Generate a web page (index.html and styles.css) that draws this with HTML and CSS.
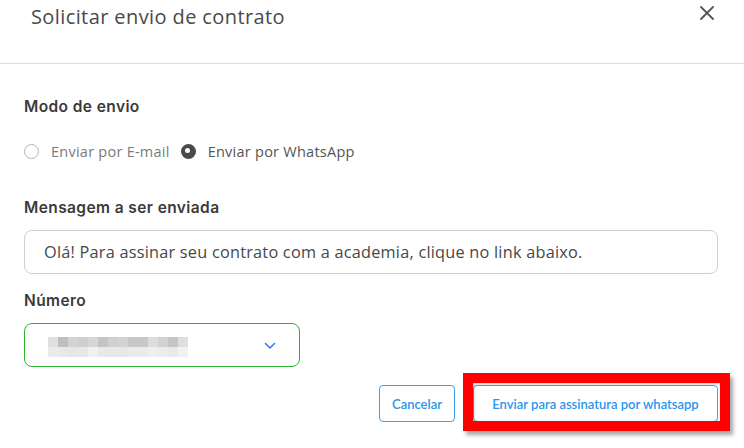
FILE: index.html
```html
<!DOCTYPE html>
<html lang="pt">
<head>
<meta charset="utf-8">
<link rel="stylesheet" href="styles.css">
</head>
<body>
<div class="modal">
  <header class="modal-header">
    <h1 class="title">Solicitar envio de contrato</h1>
    <button class="close" aria-label="Fechar">
      <svg width="14" height="14" viewBox="0 0 14 14"><path d="M1 1L13 13M13 1L1 13" stroke="#555" stroke-width="1.8" stroke-linecap="round"/></svg>
    </button>
  </header>
  <div class="modal-body">
    <div class="label">Modo de envio</div>
    <div class="radios">
      <label class="radio"><span class="dot"></span><span class="rtext">Enviar por E-mail</span></label>
      <label class="radio checked"><span class="dot"></span><span class="rtext">Enviar por WhatsApp</span></label>
    </div>
    <div class="label label-msg">Mensagem a ser enviada</div>
    <div class="input">Olá! Para assinar seu contrato com a academia, clique no link abaixo.</div>
    <div class="label label-num">Número</div>
    <div class="select">
      <div class="blur">
        <span style="background:#e0e0e0"></span><span style="background:#bdbec0"></span><span style="background:#d2d3d5"></span><span style="background:#cdced0"></span><span style="background:#d6d6d6"></span><span style="background:#c3c4c6"></span><span style="background:#d0d0d2"></span><span style="background:#d3d3d5"></span><span style="background:#c6c7c9"></span><span style="background:#c6c7c9"></span><span style="background:#dcdcdc"></span><span style="background:#d2d2d4"></span><span style="background:#c4c5c7"></span><span style="background:#dfdfdf"></span>
        <span style="background:#ebebeb"></span><span style="background:#e8e8e8"></span><span style="background:#e5e6e6"></span><span style="background:#e6e7e7"></span><span style="background:#f1f1f1"></span><span style="background:#e9e9e9"></span><span style="background:#e8e8e8"></span><span style="background:#e8e8e8"></span><span style="background:#ebebeb"></span><span style="background:#ebebeb"></span><span style="background:#efefef"></span><span style="background:#ececec"></span><span style="background:#e9e9e9"></span><span style="background:#f1f1f1"></span>
      </div>
      <svg class="chev" width="12" height="8" viewBox="0 0 12 8"><path d="M1.5 1.5L6 6L10.5 1.5" fill="none" stroke="#2f7cf6" stroke-width="1.6" stroke-linecap="round" stroke-linejoin="round"/></svg>
    </div>
    <div class="actions">
      <button class="btn">Cancelar</button>
      <button class="btn btn-send">Enviar para assinatura por whatsapp<span class="highlight"></span></button>
    </div>
  </div>
</div>
</body>
</html>
```
FILE: styles.css
```css
* { box-sizing: border-box; }
html, body { margin: 0; padding: 0; background: #fff; }
body { width: 744px; height: 448px; overflow: hidden; font-family: "Open Sans", "Lato", sans-serif; }
.modal { width: 744px; }
.modal-header {
  height: 64px;
  border-bottom: 1px solid #dedede;
  display: flex;
  align-items: flex-start;
  justify-content: space-between;
  padding: 3px 30px 0 31px;
}
.title { margin: 0; font-weight: 400; font-size: 20px; line-height: 28px; color: #4a4a4a; letter-spacing: 0.4px; }
.close { border: 0; background: none; padding: 0; margin-top: 3px; width: 14px; height: 14px; display: flex; }
.modal-body { padding: 33px 26px 0 24px; }
.label { font-family: "Inter", sans-serif; font-weight: 600; font-size: 15.5px; line-height: 20px; color: #3a3a3a; letter-spacing: 0.4px; }
.radios { display: flex; gap: 11px; margin-top: 24px; height: 20px; align-items: center; }
.radio { display: flex; align-items: center; gap: 12px; font-size: 14.5px; color: #7a7a7a; letter-spacing: 0.25px; }
.radio.checked { color: #555; }
.dot { width: 15px; height: 15px; border-radius: 50%; border: 1px solid #b5b5b5; display: block; }
.checked .dot { background: #4a4a4a; border: 5px solid #4a4a4a; position: relative; }
.checked .dot::after { content: ""; position: absolute; left: 0; top: 0; width: 5px; height: 5px; margin: -1px 0 0 -1px; border-radius: 50%; background: #fff; }
.label-msg { margin-top: 37px; }
.input {
  margin-top: 12px;
  height: 44px;
  border: 1px solid #cfcfcf;
  border-radius: 8px;
  padding: 0 19px;
  display: flex; align-items: center;
  font-size: 16.3px; color: #474747; letter-spacing: 0.23px;
}
.label-num { margin-top: 17px; }
.select {
  margin-top: 12px;
  width: 276px; height: 44px;
  border: 1px solid #2db52a;
  border-radius: 8px;
  display: flex; align-items: center; justify-content: space-between;
  padding: 0 23px 0 23px;
}
.blur { display: grid; grid-template-columns: repeat(14, 10px); grid-template-rows: 10px 10px; margin-top: 4px; }
.blur span { display: block; }
.chev { margin-top: 2px; }
.actions { display: flex; justify-content: flex-end; gap: 18px; margin-top: 18px; }
.btn {
  height: 37px; padding: 0 12px;
  border: 1px solid #3fa2f0; border-radius: 4px; background: #fff;
  font-family: "Lato", sans-serif; font-weight: 600; font-size: 13px; color: #2b96ea;
}
.btn-send { width: 245px; padding: 0; position: relative; }
.highlight {
  position: absolute; left: -11px; top: -13px; right: -13px; bottom: -10px;
  border: 10px solid #fe0000;
  box-shadow: 3px 4px 4px rgba(0,0,0,0.35), inset 1px 1px 3px rgba(0,0,0,0.25);
  pointer-events: none;
}
```
